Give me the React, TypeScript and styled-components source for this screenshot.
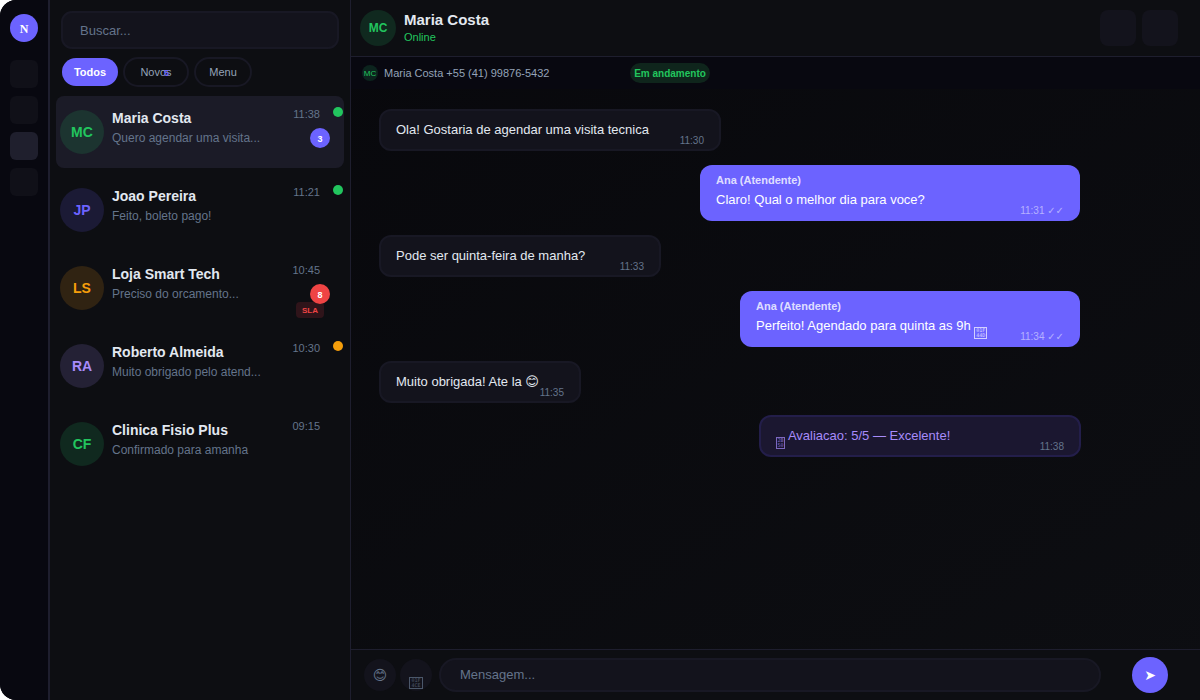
import React from "react";
import styled, { createGlobalStyle } from "styled-components";

const color = {
  primary: "#6c63ff",
  green: "#22c55e",
  orange: "#f59e0b",
  red: "#ef4444",
  violet: "#a78bfa",
  text: "#e2e8f0",
  soft: "#94a3b8",
  muted: "#64748b",
  panel: "#0d0e12",
  deep: "#080810",
  surface: "#13131c",
  line: "#1e1e2e",
  outline: "#181824",
};

const GlobalStyle = createGlobalStyle`
  *, *::before, *::after { box-sizing: border-box; }
  body {
    margin: 0;
    background: #fff;
    font-family: "Liberation Sans", Arial, "DejaVu Sans", sans-serif;
    color: ${color.text};
  }
  button, input { font-family: inherit; margin: 0; }
  h1, h2, p, ul { margin: 0; padding: 0; }
`;

const Shell = styled.div`
  display: flex;
  min-height: 100vh;
  overflow: hidden;
  border-radius: 16px 0 0 16px;
  background: linear-gradient(to bottom right, #07070b, #0d0e12);
`;

const Rail = styled.nav`
  flex: none;
  display: flex;
  flex-direction: column;
  align-items: center;
  gap: 8px;
  width: 50px;
  padding-top: 14px;
  background: ${color.deep};
  border-right: 2px solid ${color.line};
`;

const Logo = styled.a`
  display: grid;
  place-items: center;
  width: 28px;
  height: 28px;
  margin-bottom: 10px;
  border-radius: 50%;
  background: ${color.primary};
  color: #fff;
  font: bold 12px/30px "Liberation Serif", serif;
  text-decoration: none;
`;

const RailButton = styled.button<{ $active?: boolean }>`
  width: 28px;
  height: 28px;
  padding: 0;
  border: 0;
  border-radius: 6px;
  background: ${(p) => (p.$active ? "#1f1f2d" : "#101018")};
`;

const Sidebar = styled.aside`
  flex: none;
  display: flex;
  flex-direction: column;
  width: 301px;
  background: ${color.panel};
  border-right: 1px solid ${color.line};
`;

const Search = styled.input`
  height: 38px;
  margin: 11px 11px 8px;
  padding: 0 17px;
  border: 2px solid ${color.outline};
  border-radius: 11px;
  background: ${color.surface};
  color: ${color.text};
  font-size: 13px;
  outline: none;
  &::placeholder { color: ${color.muted}; opacity: 1; }
`;

const Filters = styled.div`
  display: flex;
  align-items: center;
  gap: 5px;
  height: 30px;
  padding: 0 12px;
`;

const Filter = styled.button<{ $active?: boolean; $width: number }>`
  position: relative;
  width: ${(p) => p.$width}px;
  height: ${(p) => (p.$active ? 28 : 30)}px;
  padding: 0;
  border: ${(p) => (p.$active ? "0" : `2px solid ${color.outline}`)};
  border-radius: 15px;
  background: ${(p) => (p.$active ? color.primary : "transparent")};
  color: ${(p) => (p.$active ? "#fff" : color.soft)};
  font-size: 11px;
  font-weight: ${(p) => (p.$active ? "bold" : "normal")};
`;

const FilterCount = styled.span`
  position: absolute;
  top: 8px;
  right: 18px;
  color: ${color.primary};
  font-size: 9px;
  line-height: 12px;
  font-weight: bold;
`;

const ChatList = styled.ul`
  display: flex;
  flex-direction: column;
  gap: 6px;
  padding: 9px 6px;
  list-style: none;
`;

const ChatItem = styled.li<{ $active?: boolean }>`
  position: relative;
  display: flex;
  align-items: center;
  gap: 8px;
  height: 72px;
  padding: 0 24px 0 4px;
  border-radius: 8px;
  background: ${(p) => (p.$active ? "#1b1b27" : "transparent")};
`;

const Avatar = styled.span<{ $size: number; $font: number; $fg: string; $bg: string }>`
  flex: none;
  display: grid;
  place-items: center;
  width: ${(p) => p.$size}px;
  height: ${(p) => p.$size}px;
  border-radius: 50%;
  background: ${(p) => p.$bg};
  color: ${(p) => p.$fg};
  font-size: ${(p) => p.$font}px;
  line-height: 18px;
  font-weight: ${(p) => (p.$size > 16 ? "bold" : "normal")};
`;

const ChatText = styled.div`
  flex: 1;
  min-width: 0;
  align-self: flex-start;
  padding-top: 12px;
`;

const ChatName = styled.h2`
  font-size: 14px;
  line-height: 20px;
`;

const Preview = styled.p`
  color: ${color.muted};
  font-size: 12px;
  line-height: 20px;
  white-space: nowrap;
`;

const ChatTime = styled.time`
  align-self: flex-start;
  padding-top: 10px;
  color: ${color.muted};
  font-size: 11px;
  line-height: 16px;
`;

const Presence = styled.span<{ $bg: string }>`
  position: absolute;
  top: 11px;
  right: 1px;
  width: 10px;
  height: 10px;
  border-radius: 50%;
  background: ${(p) => p.$bg};
`;

const Unread = styled.span<{ $bg: string }>`
  position: absolute;
  z-index: 1;
  top: 32px;
  right: 14px;
  width: 20px;
  height: 20px;
  border-radius: 50%;
  background: ${(p) => p.$bg};
  color: #fff;
  font-size: 9px;
  line-height: 22px;
  font-weight: bold;
  text-align: center;
`;

const SlaTag = styled.span`
  position: absolute;
  top: 50px;
  right: 20px;
  width: 28px;
  height: 16px;
  border-radius: 4px;
  background: #2f141a;
  color: ${color.red};
  font-size: 8px;
  line-height: 17px;
  font-weight: bold;
  text-align: center;
`;

const Conversation = styled.main`
  flex: 1;
  min-width: 0;
  display: flex;
  flex-direction: column;
`;

const Header = styled.header`
  display: flex;
  align-items: center;
  gap: 6px;
  height: 57px;
  padding: 0 22px 0 9px;
  background: ${color.panel};
  border-bottom: 1px solid ${color.line};
`;

const Contact = styled.div`
  flex: 1;
  padding-left: 2px;
`;

const ContactName = styled.h1`
  font-size: 15px;
  line-height: 18px;
`;

const ContactStatus = styled.p`
  color: ${color.green};
  font-size: 11px;
  line-height: 16px;
`;

const HeaderButton = styled.button`
  width: 36px;
  height: 36px;
  padding: 0;
  border: 0;
  border-radius: 8px;
  background: ${color.surface};
`;

const ContextBar = styled.div`
  display: flex;
  align-items: center;
  gap: 6px;
  height: 32px;
  padding: 0 11px;
  background: ${color.deep};
`;

const ContextText = styled.span`
  width: 240px;
  color: ${color.soft};
  font-size: 11px;
  line-height: 16px;
`;

const StatusPill = styled.span`
  width: 80px;
  height: 20px;
  border-radius: 10px;
  background: #0f251c;
  color: ${color.green};
  font-size: 10px;
  line-height: 22px;
  font-weight: bold;
  text-align: center;
`;

const Thread = styled.section`
  flex: 1;
  display: flex;
  flex-direction: column;
  align-items: flex-start;
  gap: 14px;
  padding: 20px 119px 20px 28px;
`;

type Kind = "in" | "out" | "rating";

const Bubble = styled.article<{ $kind: Kind; $width: number }>`
  display: flex;
  justify-content: space-between;
  width: ${(p) => p.$width}px;
  max-width: 100%;
  min-height: ${(p) => (p.$kind === "out" ? 56 : 42)}px;
  margin-top: ${(p) => (p.$kind === "rating" ? -2 : 0)}px;
  margin-right: ${(p) => (p.$kind === "out" ? 1 : 0)}px;
  padding: ${(p) => (p.$kind === "out" ? "6px 16px 2px" : "0 15px")};
  align-self: ${(p) => (p.$kind === "in" ? "flex-start" : "flex-end")};
  border-radius: 12px;
  border: ${(p) =>
    p.$kind === "out" ? "0" : `2px solid ${p.$kind === "in" ? color.outline : "#231e4a"}`};
  background: ${(p) =>
    ({ in: color.surface, out: color.primary, rating: "#1b1730" })[p.$kind]};
  color: ${(p) => ({ in: color.text, out: "#fff", rating: color.violet })[p.$kind]};
`;

const BubbleBody = styled.div`
  min-width: 0;
  align-self: flex-start;
  font-size: 13px;
  white-space: nowrap;
`;

const Author = styled.p`
  color: rgba(255, 255, 255, 0.8);
  font-size: 11px;
  line-height: 18px;
  font-weight: bold;
`;

const Message = styled.p<{ $kind: Kind }>`
  line-height: ${(p) => (p.$kind === "out" ? 22 : 38)}px;
`;

const BubbleTime = styled.time<{ $kind: Kind }>`
  align-self: flex-end;
  color: ${(p) => (p.$kind === "out" ? "rgba(255,255,255,0.5)" : color.muted)};
  font-size: 10px;
  line-height: 16px;
  white-space: nowrap;
`;

const Smile = styled.span`
  font-family: "DejaVu Sans", sans-serif;
`;

/* Hex code box: the code point in two rows of small digits. */
const CodeBox = styled.span<{ $width: number }>`
  display: inline-grid;
  align-content: center;
  justify-content: center;
  width: ${(p) => p.$width}px;
  height: 12px;
  border: 1px solid currentColor;
  font: 5px/5px "DejaVu Sans Mono", monospace;
  vertical-align: -2px;
  opacity: 0.7;
`;

const Composer = styled.form`
  display: flex;
  align-items: center;
  height: 51px;
  padding: 0 32px 0 13px;
  background: ${color.panel};
  border-top: 1px solid ${color.line};
`;

const ToolButton = styled.button`
  flex: none;
  width: 32px;
  height: 32px;
  margin-right: 4px;
  padding: 0;
  border: 0;
  border-radius: 50%;
  background: ${color.surface};
  color: ${color.muted};
  font-size: 14px;
  line-height: 32px;
`;

const MessageInput = styled.input`
  flex: 1;
  min-width: 0;
  height: 34px;
  margin: 0 31px 0 3px;
  padding: 0 19px 2px;
  border: 2px solid ${color.outline};
  border-radius: 17px;
  background: ${color.surface};
  color: ${color.text};
  font-size: 13px;
  outline: none;
  &::placeholder { color: ${color.muted}; opacity: 1; }
`;

const SendButton = styled.button`
  flex: none;
  width: 36px;
  height: 36px;
  padding: 0;
  border: 0;
  border-radius: 50%;
  background: ${color.primary};
  color: #fff;
  font-size: 14px;
  line-height: 36px;
`;

function HexGlyph({ top, bottom, width }: { top: string; bottom: string; width: number }) {
  return (
    <CodeBox $width={width}>
      <span>{top}</span>
      <span>{bottom}</span>
    </CodeBox>
  );
}

interface Chat {
  initials: string;
  name: string;
  preview: string;
  time: string;
  fg: string;
  bg: string;
  presence?: string;
  unread?: number;
  sla?: boolean;
}

const chats: Chat[] = [
  { initials: "MC", name: "Maria Costa", preview: "Quero agendar uma visita...", time: "11:38", fg: color.green, bg: "#1c3430", presence: color.green, unread: 3 },
  { initials: "JP", name: "Joao Pereira", preview: "Feito, boleto pago!", time: "11:21", fg: color.primary, bg: "#1b1a35", presence: color.green },
  { initials: "LS", name: "Loja Smart Tech", preview: "Preciso do orcamento...", time: "10:45", fg: color.orange, bg: "#302312", unread: 8, sla: true },
  { initials: "RA", name: "Roberto Almeida", preview: "Muito obrigado pelo atend...", time: "10:30", fg: color.violet, bg: "#242135", presence: color.orange },
  { initials: "CF", name: "Clinica Fisio Plus", preview: "Confirmado para amanha", time: "09:15", fg: color.green, bg: "#10291f" },
];

const messages: { kind: Kind; width: number; text: React.ReactNode; time: string }[] = [
  { kind: "in", width: 342, text: "Ola! Gostaria de agendar uma visita tecnica", time: "11:30" },
  { kind: "out", width: 380, text: "Claro! Qual o melhor dia para voce?", time: "11:31 ✓✓" },
  { kind: "in", width: 282, text: "Pode ser quinta-feira de manha?", time: "11:33" },
  {
    kind: "out",
    width: 340,
    text: <>Perfeito! Agendado para quinta as 9h <HexGlyph top="01F" bottom="44D" width={13} /></>,
    time: "11:34 ✓✓",
  },
  { kind: "in", width: 202, text: <>Muito obrigada! Ate la <Smile>{"😊\uFE0E"}</Smile></>, time: "11:35" },
  {
    kind: "rating",
    width: 322,
    text: <><HexGlyph top="2B" bottom="50" width={9} /> Avaliacao: 5/5 — Excelente!</>,
    time: "11:38",
  },
];

export default function App() {
  return (
    <>
      <GlobalStyle />
      <Shell>
        <Rail>
          <Logo href="#">N</Logo>
          <RailButton aria-label="Painel" />
          <RailButton aria-label="Contatos" />
          <RailButton aria-label="Conversas" $active />
          <RailButton aria-label="Ajustes" />
        </Rail>
        <Sidebar>
          <Search type="text" aria-label="Buscar" placeholder="Buscar..." />
          <Filters>
            <Filter $active $width={56}>Todos</Filter>
            <Filter $width={66}>
              Novos
              <FilterCount>5</FilterCount>
            </Filter>
            <Filter $width={58}>Menu</Filter>
          </Filters>
          <ChatList>
            {chats.map((c, i) => (
              <ChatItem key={c.name} $active={i === 0}>
                <Avatar $size={44} $font={14} $fg={c.fg} $bg={c.bg}>{c.initials}</Avatar>
                <ChatText>
                  <ChatName>{c.name}</ChatName>
                  <Preview>{c.preview}</Preview>
                </ChatText>
                <ChatTime>{c.time}</ChatTime>
                {c.presence && <Presence $bg={c.presence} />}
                {c.unread && <Unread $bg={c.sla ? color.red : color.primary}>{c.unread}</Unread>}
                {c.sla && <SlaTag>SLA</SlaTag>}
              </ChatItem>
            ))}
          </ChatList>
        </Sidebar>
        <Conversation>
          <Header>
            <Avatar $size={36} $font={12} $fg={color.green} $bg="#10291f">MC</Avatar>
            <Contact>
              <ContactName>Maria Costa</ContactName>
              <ContactStatus>Online</ContactStatus>
            </Contact>
            <HeaderButton aria-label="Ligar" />
            <HeaderButton aria-label="Mais" />
          </Header>
          <ContextBar>
            <Avatar $size={16} $font={8} $fg={color.green} $bg="#0c241e">MC</Avatar>
            <ContextText>Maria Costa +55 (41) 99876-5432</ContextText>
            <StatusPill>Em andamento</StatusPill>
          </ContextBar>
          <Thread>
            {messages.map((m) => (
              <Bubble key={m.time} $kind={m.kind} $width={m.width}>
                <BubbleBody>
                  {m.kind === "out" && <Author>Ana (Atendente)</Author>}
                  <Message $kind={m.kind}>{m.text}</Message>
                </BubbleBody>
                <BubbleTime $kind={m.kind}>{m.time}</BubbleTime>
              </Bubble>
            ))}
          </Thread>
          <Composer onSubmit={(e) => e.preventDefault()}>
            <ToolButton type="button" aria-label="Emoji"><Smile>{"😊\uFE0E"}</Smile></ToolButton>
            <ToolButton type="button" aria-label="Anexar">
              <HexGlyph top="01F" bottom="4CE" width={14} />
            </ToolButton>
            <MessageInput type="text" aria-label="Mensagem" placeholder="Mensagem..." />
            <SendButton type="submit" aria-label="Enviar">➤</SendButton>
          </Composer>
        </Conversation>
      </Shell>
    </>
  );
}
